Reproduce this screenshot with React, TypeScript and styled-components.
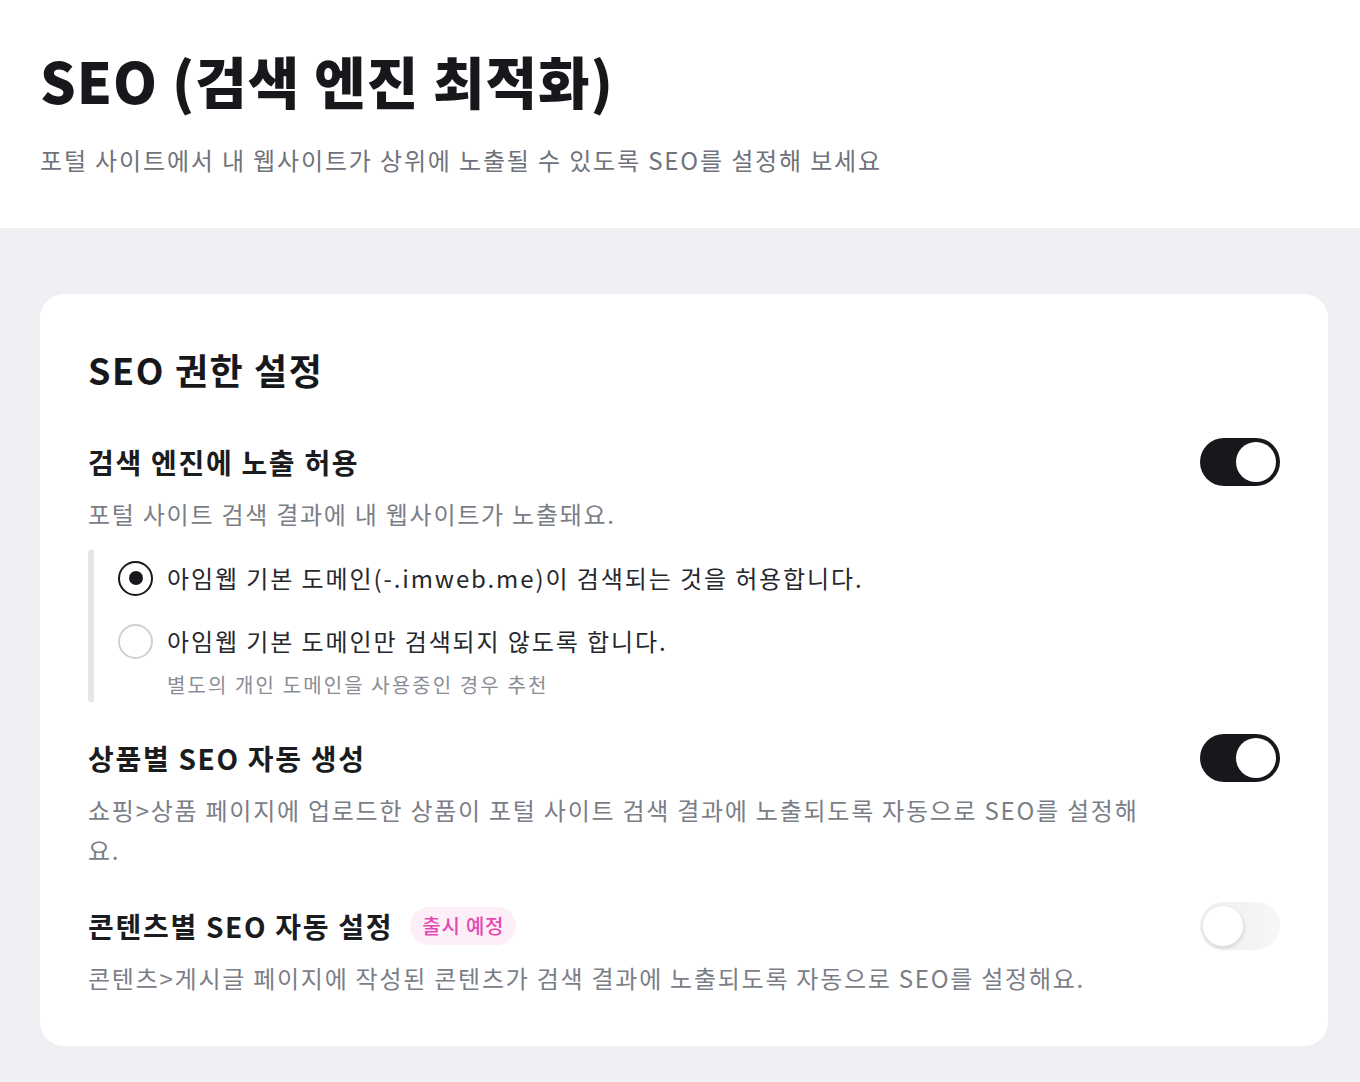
import React, { useState } from 'react'
import styled, { createGlobalStyle } from 'styled-components'

const GlobalStyle = createGlobalStyle`
  * { box-sizing: border-box; }
  html, body {
    margin: 0;
    padding: 0;
    background: #eff0f3;
    font-family: "Noto Sans CJK KR", "Noto Sans", sans-serif;
    -webkit-font-smoothing: antialiased;
  }
`

type Option = { id: string; label: string; hint?: string }

const options: Option[] = [
  { id: 'allow', label: '아임웹 기본 도메인(-.imweb.me)이 검색되는 것을 허용합니다.' },
  { id: 'block', label: '아임웹 기본 도메인만 검색되지 않도록 합니다.', hint: '별도의 개인 도메인을 사용중인 경우 추천' },
]

const App = () => {
  const [expose, setExpose] = useState(true)
  const [product, setProduct] = useState(true)
  const [domain, setDomain] = useState('allow')

  return (
    <Page>
      <GlobalStyle />
      <Header>
        <h1>SEO (검색 엔진 최적화)</h1>
        <p>포털 사이트에서 내 웹사이트가 상위에 노출될 수 있도록 SEO를 설정해 보세요</p>
      </Header>
      <Main>
        <Card>
          <CardTitle>SEO 권한 설정</CardTitle>

          <Section>
            <Row>
              <ItemTitle>검색 엔진에 노출 허용</ItemTitle>
              <Toggle $on={expose} onClick={() => setExpose(!expose)} aria-label="검색 엔진에 노출 허용" />
            </Row>
            <Desc>포털 사이트 검색 결과에 내 웹사이트가 노출돼요.</Desc>
            <RadioGroup>
              {options.map((o) => (
                <RadioItem key={o.id}>
                  <RadioRow onClick={() => setDomain(o.id)}>
                    <Radio $checked={domain === o.id} />
                    <RadioLabel>{o.label}</RadioLabel>
                  </RadioRow>
                  {o.hint && <RadioHint>{o.hint}</RadioHint>}
                </RadioItem>
              ))}
            </RadioGroup>
          </Section>

          <Section>
            <Row>
              <ItemTitle>상품별 SEO 자동 생성</ItemTitle>
              <Toggle $on={product} onClick={() => setProduct(!product)} aria-label="상품별 SEO 자동 생성" />
            </Row>
            <Desc>쇼핑&gt;상품 페이지에 업로드한 상품이 포털 사이트 검색 결과에 노출되도록 자동으로 SEO를 설정해요.</Desc>
          </Section>

          <Section>
            <Row>
              <ItemTitle>
                콘텐츠별 SEO 자동 설정
                <Badge>출시 예정</Badge>
              </ItemTitle>
              <Toggle $on={false} $disabled aria-label="콘텐츠별 SEO 자동 설정" />
            </Row>
            <Desc>콘텐츠&gt;게시글 페이지에 작성된 콘텐츠가 검색 결과에 노출되도록 자동으로 SEO를 설정해요.</Desc>
          </Section>
        </Card>
      </Main>
    </Page>
  )
}

export default App

const Page = styled.div`
  width: 100%;
  min-height: 100vh;
  background: #eff0f3;
`

const Header = styled.header`
  background: #fff;
  padding: 40px 40px 50px;
  h1 {
    margin: 0;
    font-size: 56px;
    line-height: 80px;
    font-weight: 800;
    color: #17181c;
    letter-spacing: 1px;
  }
  p {
    margin: 22px 0 0;
    font-size: 24px;
    line-height: 36px;
    color: #6f727b;
    letter-spacing: 1.85px;
  }
`

const Main = styled.main`
  padding: 66px 32px 36px 40px;
`

const Card = styled.section`
  background: #fff;
  border-radius: 24px;
  padding: 51px 48px 48px;
  display: flex;
  flex-direction: column;
  gap: 32px;
`

const CardTitle = styled.h2`
  margin: 0 0 13px;
  font-size: 36px;
  line-height: 48px;
  font-weight: 700;
  color: #17181c;
  letter-spacing: 1.6px;
`

const Section = styled.div`
  display: flex;
  flex-direction: column;
`

const Row = styled.div`
  display: flex;
  align-items: center;
  justify-content: space-between;
  height: 48px;
`

const ItemTitle = styled.h3`
  margin: 0;
  display: flex;
  align-items: center;
  font-size: 28px;
  line-height: 40px;
  font-weight: 700;
  color: #1b1c20;
  letter-spacing: 1.7px;
`

const Badge = styled.span`
  display: inline-flex;
  align-items: center;
  height: 38px;
  padding: 0 12px;
  margin-left: 17px;
  border-radius: 19px;
  background: #fdeef7;
  color: #e448b3;
  font-size: 20px;
  font-weight: 500;
  letter-spacing: 0.8px;
`

const Desc = styled.p`
  margin: 8px 0 0;
  max-width: 1072px;
  font-size: 24px;
  line-height: 40px;
  color: #7b7e87;
  letter-spacing: 1.75px;
`

const Toggle = styled.button<{ $on: boolean; $disabled?: boolean }>`
  position: relative;
  flex: none;
  width: 80px;
  height: 48px;
  padding: 0;
  border: none;
  border-radius: 24px;
  cursor: ${(p) => (p.$disabled ? 'default' : 'pointer')};
  background: ${(p) => (p.$on ? '#17181c' : 'linear-gradient(90deg, #eeeef0, #f7f7f8)')};
  &::after {
    content: '';
    position: absolute;
    top: 4px;
    left: ${(p) => (p.$on ? '36px' : '3px')};
    width: 40px;
    height: 40px;
    border-radius: 50%;
    background: #fff;
    box-shadow: ${(p) => (p.$on ? 'none' : '1px 2px 4px rgba(0, 0, 0, 0.12)')};
  }
`

const RadioGroup = styled.div`
  margin-top: 16px;
  padding: 8px 0 3px 24px;
  border-left: 6px solid #e4e5e9;
  border-radius: 3px;
  display: flex;
  flex-direction: column;
  gap: 23px;
`

const RadioItem = styled.div`
  display: flex;
  flex-direction: column;
`

const RadioRow = styled.label`
  display: flex;
  align-items: center;
  gap: 14px;
  height: 40px;
  cursor: pointer;
`

const Radio = styled.span<{ $checked: boolean }>`
  position: relative;
  flex: none;
  width: 35px;
  height: 35px;
  border-radius: 50%;
  border: ${(p) => (p.$checked ? '2.5px solid #17181c' : '2px solid #cfd1d6')};
  &::after {
    content: '';
    display: ${(p) => (p.$checked ? 'block' : 'none')};
    position: absolute;
    top: 50%;
    left: 50%;
    width: 14px;
    height: 14px;
    margin: -7px 0 0 -7px;
    border-radius: 50%;
    background: #17181c;
  }
`

const RadioLabel = styled.span`
  font-size: 24px;
  line-height: 40px;
  color: #26282d;
  letter-spacing: 1.9px;
`

const RadioHint = styled.span`
  margin: 10px 0 0 49px;
  font-size: 20px;
  line-height: 28px;
  color: #8a8d95;
  letter-spacing: 2.1px;
`
